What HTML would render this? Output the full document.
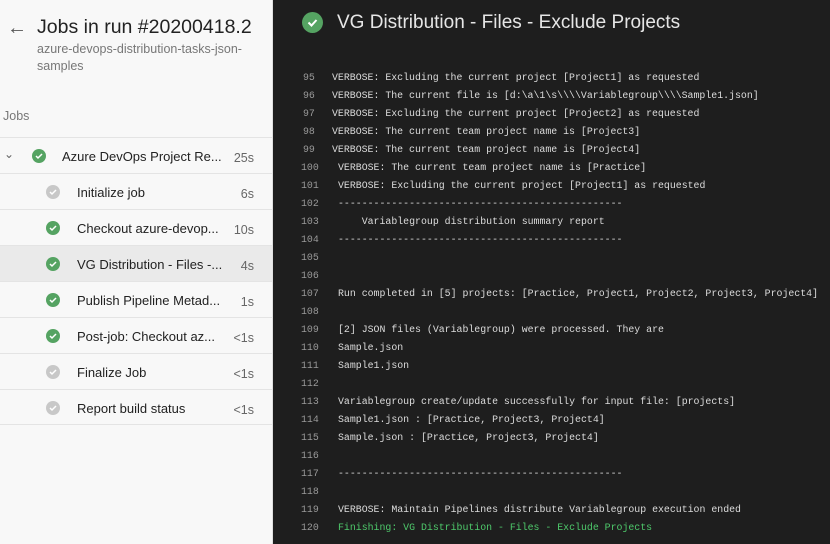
<!DOCTYPE html>
<html><head><style>
*{margin:0;padding:0;box-sizing:border-box}
body{width:830px;height:544px;overflow:hidden;background:#1e1e1e;font-family:"Liberation Sans",sans-serif;position:relative}
#left{position:absolute;left:0;top:0;width:273px;height:544px;background:#f8f8f8;border-right:1px solid #e0e0e0}
.t{position:absolute}
.row{position:absolute;left:0;width:272px;height:36px;border-top:1px solid #e4e4e4;font-size:13px;color:#222}
.row .ic{position:absolute;top:11px;width:14px;height:14px;border-radius:50%}
.row .lb{position:absolute;top:11px}
.row .d{position:absolute;right:18px;top:13px;color:#666;font-size:12.5px}
.g{background:#55a362}.s{background:#c8c8c8}
.ic svg{position:absolute;left:3px;top:3px}
#log{position:absolute;left:0;top:1px;font-family:"Liberation Mono",monospace;font-size:9.9px;color:#dcdcdc;white-space:pre}
.ln{position:absolute;color:#9a9a9a;height:18px;line-height:18px}
.tx{position:absolute;height:18px;line-height:18px}
</style></head><body>
<div id="left">
<div class="t" style="left:7px;top:17px;font-size:20px;color:#555">&#8592;</div>
<div class="t" style="left:37px;top:16px;font-size:19.5px;color:#222">Jobs in run #20200418.2</div>
<div class="t" style="left:37px;top:41px;font-size:12.5px;color:#777;line-height:17px;width:230px">azure-devops-distribution-tasks-json-<br>samples</div>
<div class="t" style="left:3px;top:109px;font-size:12.5px;color:#777">Jobs</div>
<div class="row" style="top:137px"><span class="t" style="left:4px;top:9px;color:#666;font-size:12px">&#8964;</span><div class="ic g" style="left:32px"><svg width="8" height="8" viewBox="0 0 8 8"><path d="M1 4l2 2 4-4" stroke="#fff" stroke-width="1.5" fill="none"/></svg></div><span class="lb" style="left:62px">Azure DevOps Project Re...</span><span class="d">25s</span></div>
<div class="row" style="top:173px"><div class="ic s" style="left:46px"><svg width="8" height="8" viewBox="0 0 8 8"><path d="M1 4l2 2 4-4" stroke="#fff" stroke-width="1.5" fill="none"/></svg></div><span class="lb" style="left:77px">Initialize job</span><span class="d">6s</span></div>
<div class="row" style="top:209px"><div class="ic g" style="left:46px"><svg width="8" height="8" viewBox="0 0 8 8"><path d="M1 4l2 2 4-4" stroke="#fff" stroke-width="1.5" fill="none"/></svg></div><span class="lb" style="left:77px">Checkout azure-devop...</span><span class="d">10s</span></div>
<div class="row" style="top:245px;background:#eaeaea"><div class="ic g" style="left:46px"><svg width="8" height="8" viewBox="0 0 8 8"><path d="M1 4l2 2 4-4" stroke="#fff" stroke-width="1.5" fill="none"/></svg></div><span class="lb" style="left:77px">VG Distribution - Files -...</span><span class="d">4s</span></div>
<div class="row" style="top:281px"><div class="ic g" style="left:46px"><svg width="8" height="8" viewBox="0 0 8 8"><path d="M1 4l2 2 4-4" stroke="#fff" stroke-width="1.5" fill="none"/></svg></div><span class="lb" style="left:77px">Publish Pipeline Metad...</span><span class="d">1s</span></div>
<div class="row" style="top:317px"><div class="ic g" style="left:46px"><svg width="8" height="8" viewBox="0 0 8 8"><path d="M1 4l2 2 4-4" stroke="#fff" stroke-width="1.5" fill="none"/></svg></div><span class="lb" style="left:77px">Post-job: Checkout az...</span><span class="d">&lt;1s</span></div>
<div class="row" style="top:353px"><div class="ic s" style="left:46px"><svg width="8" height="8" viewBox="0 0 8 8"><path d="M1 4l2 2 4-4" stroke="#fff" stroke-width="1.5" fill="none"/></svg></div><span class="lb" style="left:77px">Finalize Job</span><span class="d">&lt;1s</span></div>
<div class="row" style="top:389px;border-bottom:1px solid #e4e4e4"><div class="ic s" style="left:46px"><svg width="8" height="8" viewBox="0 0 8 8"><path d="M1 4l2 2 4-4" stroke="#fff" stroke-width="1.5" fill="none"/></svg></div><span class="lb" style="left:77px">Report build status</span><span class="d">&lt;1s</span></div>
</div>
<div class="t" style="left:302px;top:12px;width:21px;height:21px;border-radius:50%;background:#55a362"><svg width="21" height="21" viewBox="0 0 21 21"><path d="M6.5 10.5l3 3 5-5.5" stroke="#fff" stroke-width="2" fill="none"/></svg></div>
<div class="t" style="left:337px;top:12px;font-size:19px;color:#e6e6e6">VG Distribution - Files - Exclude Projects</div>
<div id="log">
<div class="ln" style="left:303px;top:68px">95</div><div class="tx" style="left:332px;top:68px">VERBOSE: Excluding the current project [Project1] as requested</div>
<div class="ln" style="left:303px;top:86px">96</div><div class="tx" style="left:332px;top:86px">VERBOSE: The current file is [d:\a\1\s\\\\Variablegroup\\\\Sample1.json]</div>
<div class="ln" style="left:303px;top:104px">97</div><div class="tx" style="left:332px;top:104px">VERBOSE: Excluding the current project [Project2] as requested</div>
<div class="ln" style="left:303px;top:122px">98</div><div class="tx" style="left:332px;top:122px">VERBOSE: The current team project name is [Project3]</div>
<div class="ln" style="left:303px;top:140px">99</div><div class="tx" style="left:332px;top:140px">VERBOSE: The current team project name is [Project4]</div>
<div class="ln" style="left:301px;top:158px">100</div><div class="tx" style="left:338px;top:158px">VERBOSE: The current team project name is [Practice]</div>
<div class="ln" style="left:301px;top:176px">101</div><div class="tx" style="left:338px;top:176px">VERBOSE: Excluding the current project [Project1] as requested</div>
<div class="ln" style="left:301px;top:194px">102</div><div class="tx" style="left:338px;top:194px">------------------------------------------------</div>
<div class="ln" style="left:301px;top:212px">103</div><div class="tx" style="left:338px;top:212px">    Variablegroup distribution summary report</div>
<div class="ln" style="left:301px;top:230px">104</div><div class="tx" style="left:338px;top:230px">------------------------------------------------</div>
<div class="ln" style="left:301px;top:248px">105</div>
<div class="ln" style="left:301px;top:266px">106</div>
<div class="ln" style="left:301px;top:284px">107</div><div class="tx" style="left:338px;top:284px">Run completed in [5] projects: [Practice, Project1, Project2, Project3, Project4]</div>
<div class="ln" style="left:301px;top:302px">108</div>
<div class="ln" style="left:301px;top:320px">109</div><div class="tx" style="left:338px;top:320px">[2] JSON files (Variablegroup) were processed. They are</div>
<div class="ln" style="left:301px;top:338px">110</div><div class="tx" style="left:338px;top:338px">Sample.json</div>
<div class="ln" style="left:301px;top:356px">111</div><div class="tx" style="left:338px;top:356px">Sample1.json</div>
<div class="ln" style="left:301px;top:374px">112</div>
<div class="ln" style="left:301px;top:392px">113</div><div class="tx" style="left:338px;top:392px">Variablegroup create/update successfully for input file: [projects]</div>
<div class="ln" style="left:301px;top:410px">114</div><div class="tx" style="left:338px;top:410px">Sample1.json : [Practice, Project3, Project4]</div>
<div class="ln" style="left:301px;top:428px">115</div><div class="tx" style="left:338px;top:428px">Sample.json : [Practice, Project3, Project4]</div>
<div class="ln" style="left:301px;top:446px">116</div>
<div class="ln" style="left:301px;top:464px">117</div><div class="tx" style="left:338px;top:464px">------------------------------------------------</div>
<div class="ln" style="left:301px;top:482px">118</div>
<div class="ln" style="left:301px;top:500px">119</div><div class="tx" style="left:338px;top:500px">VERBOSE: Maintain Pipelines distribute Variablegroup execution ended</div>
<div class="ln" style="left:301px;top:518px">120</div><div class="tx" style="left:338px;top:518px;color:#4ec96b">Finishing: VG Distribution - Files - Exclude Projects</div>
</div>
</body></html>
